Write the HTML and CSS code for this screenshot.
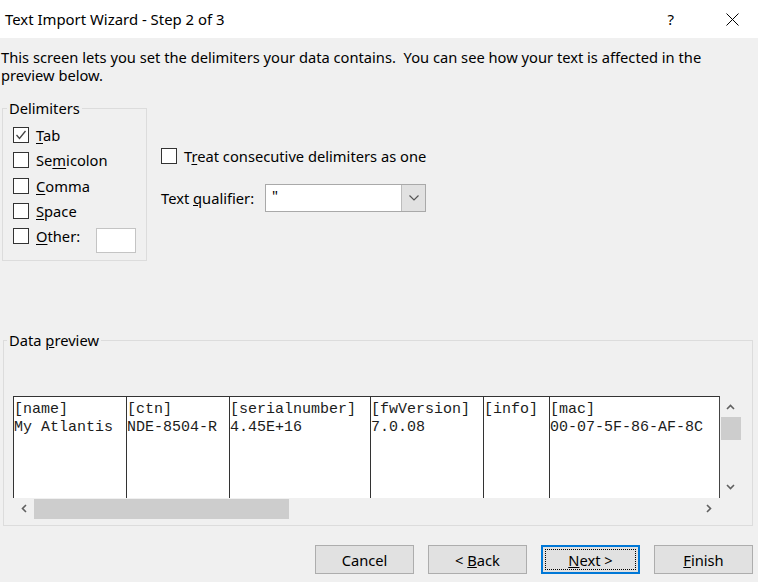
FILE: index.html
```html
<!DOCTYPE html>
<html lang="en">
<head>
  <meta charset="UTF-8">
  <title>Text Import Wizard - Step 2 of 3</title>
  <link rel="stylesheet" href="styles.css">
</head>
<body>
  <div class="titlebar">
    <span class="title">Text Import Wizard - Step 2 of 3</span>
    <span class="help">?</span>
    <svg class="close" viewBox="0 0 13 13"><path d="M0.5 0.5L12.5 12.5M12.5 0.5L0.5 12.5"/></svg>
  </div>

  <div class="wizard">
    <p class="intro">This screen lets you set the delimiters your data contains.&nbsp; You can see how your text is affected in the<br>preview below.</p>

    <div class="options">
      <fieldset class="group delimiters">
        <legend>Delimiters</legend>
        <div class="checks">
          <label class="check">
            <span class="box"><svg viewBox="0 0 14 14"><path d="M2.5 7L5.5 10.5L11.5 3"/></svg></span>
            <span><u>T</u>ab</span>
          </label>
          <label class="check"><span class="box"></span><span>Se<u>m</u>icolon</span></label>
          <label class="check"><span class="box"></span><span><u>C</u>omma</span></label>
          <label class="check"><span class="box"></span><span><u>S</u>pace</span></label>
          <label class="check other">
            <span class="box"></span><span><u>O</u>ther:</span>
            <span class="field"></span>
          </label>
        </div>
      </fieldset>

      <div class="settings">
        <label class="check"><span class="box"></span><span>T<u>r</u>eat consecutive delimiters as one</span></label>
        <div class="qualifier">
          <span class="qualifier-label">Text <u>q</u>ualifier:</span>
          <div class="combo">
            <span class="value">"</span>
            <span class="drop"><svg viewBox="0 0 10 6"><path d="M0.5 0.5L5 5L9.5 0.5"/></svg></span>
          </div>
        </div>
      </div>
    </div>

    <fieldset class="group preview">
      <legend>Data <u>p</u>review</legend>
      <div class="grid">
        <div class="viewport">
          <div class="col" style="width: 112px"><div>[name]</div><div>My Atlantis</div></div>
          <div class="col" style="width: 102px"><div>[ctn]</div><div>NDE-8504-R</div></div>
          <div class="col" style="width: 140px"><div>[serialnumber]</div><div>4.45E+16</div></div>
          <div class="col" style="width: 112px"><div>[fwVersion]</div><div>7.0.08</div></div>
          <div class="col" style="width: 65px"><div>[info]</div><div></div></div>
          <div class="col" style="width: 200px"><div>[mac]</div><div>00-07-5F-86-AF-8C</div></div>
        </div>
        <div class="vscroll">
          <svg class="arrow" viewBox="0 0 9 6"><path d="M1 5L4.5 1.5L8 5"/></svg>
          <div class="vthumb"></div>
          <svg class="arrow down" viewBox="0 0 9 6"><path d="M1 1L4.5 4.5L8 1"/></svg>
        </div>
        <div class="hscroll">
          <svg class="arrow" viewBox="0 0 6 9"><path d="M5 1L1.5 4.5L5 8"/></svg>
          <div class="hthumb"></div>
          <svg class="arrow right" viewBox="0 0 6 9"><path d="M1 1L4.5 4.5L1 8"/></svg>
        </div>
        <div class="corner"></div>
      </div>
    </fieldset>

    <div class="buttons">
      <button class="btn">Cancel</button>
      <button class="btn">&lt; <u>B</u>ack</button>
      <button class="btn default"><u>N</u>ext &gt;</button>
      <button class="btn"><u>F</u>inish</button>
    </div>
  </div>
</body>
</html>
```

FILE: styles.css
```css
body {
  margin: 0;
  background: #f0f0f0;
  font-family: "Noto Sans", sans-serif;
  font-size: 14.7px;
  color: #000;
}

/* window caption */
.titlebar {
  height: 38px;
  background: #fff;
  display: flex;
  align-items: center;
  padding-left: 5px;
}

.title {
  flex: 1;
  font-size: 14.9px;
}

.help {
  font-size: 15px;
  margin-right: 52px;
}

.close {
  width: 13px;
  height: 13px;
  margin-right: 19px;
  fill: none;
  stroke: #000;
  stroke-width: 1;
}

.intro {
  margin: 10px 0 0;
  padding-left: 1px;
  line-height: 18px;
}

.options {
  display: flex;
  margin-top: 16px;
}

/* group boxes */
.group {
  margin: 0;
  min-width: 0;
  box-sizing: border-box;
  border: 1px solid #dcdcdc;
}

.group legend {
  padding: 0 2px;
  margin-left: -6px;
  line-height: 17px;
}

.delimiters {
  width: 145px;
  margin-left: 2px;
  padding: 10px 10px 7px 10px;
}

.checks {
  display: flex;
  flex-direction: column;
  gap: 9.25px;
}

.check {
  display: flex;
  align-items: center;
  gap: 7px;
  height: 16px;
  line-height: 16px;
}

.check u {
  text-underline-offset: 2px;
}

.box {
  width: 16px;
  height: 16px;
  flex-shrink: 0;
  box-sizing: border-box;
  border: 1px solid #333;
  background: #fff;
}

.box svg {
  display: block;
  width: 14px;
  height: 14px;
  fill: none;
  stroke: #444;
  stroke-width: 1.3;
}

.other {
  align-items: flex-start;
  height: 25px;
}

.field {
  width: 40px;
  height: 25px;
  margin-left: auto;
  box-sizing: border-box;
  border: 1px solid #c4c4c4;
  background: #fff;
}

.settings {
  margin: 48px 0 0 14px;
}

.qualifier {
  display: flex;
  align-items: center;
  margin-top: 20px;
}

.qualifier-label {
  width: 104px;
}

.combo {
  display: flex;
  width: 161px;
  height: 28px;
  box-sizing: border-box;
  border: 1px solid #a9a9a9;
  background: #fff;
}

.combo .value {
  flex: 1;
  padding: 2px 6px 0;
  line-height: 16px;
}

.drop {
  width: 23px;
  display: flex;
  align-items: center;
  justify-content: center;
  background: #e1e1e1;
  border-left: 1px solid #bcbcbc;
}

.drop svg {
  width: 10px;
  height: 6px;
  fill: none;
  stroke: #555;
  stroke-width: 1.2;
}

/* data preview */
.preview {
  width: 750px;
  margin: 71px 0 0 3px;
  padding: 47px 0 6px 9px;
}

.grid {
  display: grid;
  grid-template-columns: 707px 21px;
  grid-template-rows: 102px 21px;
}

.viewport {
  display: flex;
  overflow: hidden;
  box-sizing: border-box;
  background: #fff;
  border-top: 1px solid #333;
  border-right: 1px solid #444;
  font-family: "Liberation Mono", monospace;
  font-size: 15px;
  line-height: 18px;
  color: #1c1c1c;
}

.col {
  flex-shrink: 0;
  padding-top: 4px;
  border-left: 1px solid #333;
  white-space: nowrap;
}

.col div {
  height: 18px;
}

.vscroll {
  display: flex;
  flex-direction: column;
  align-items: center;
}

.vscroll .arrow {
  width: 9px;
  height: 6px;
  margin: 8px 0 7px;
}

.vscroll .arrow.down {
  margin: auto 0 8px;
}

.vthumb {
  align-self: flex-end;
  width: 20px;
  height: 23px;
  background: #cdcdcd;
}

.hscroll {
  display: flex;
  align-items: center;
}

.hscroll .arrow {
  width: 6px;
  height: 9px;
  margin: 0 7px 0 8px;
}

.hscroll .arrow.right {
  margin: 0 8px 0 auto;
}

.hthumb {
  align-self: flex-end;
  width: 255px;
  height: 20px;
  background: #cdcdcd;
}

.arrow {
  fill: none;
  stroke: #606060;
  stroke-width: 1.6;
}

/* dialog buttons */
.buttons {
  display: flex;
  justify-content: flex-end;
  gap: 14px;
  margin-top: 19px;
  padding-right: 5px;
}

.btn {
  width: 99px;
  height: 29px;
  padding: 0;
  border: 1px solid #adadad;
  background: #e1e1e1;
  font-family: inherit;
  font-size: 14.7px;
  color: #000;
}

.btn.default {
  border-color: #0078d7;
  box-shadow: inset 0 0 0 1px #0078d7;
  outline: 1px dotted #000;
  outline-offset: -5px;
}
```
